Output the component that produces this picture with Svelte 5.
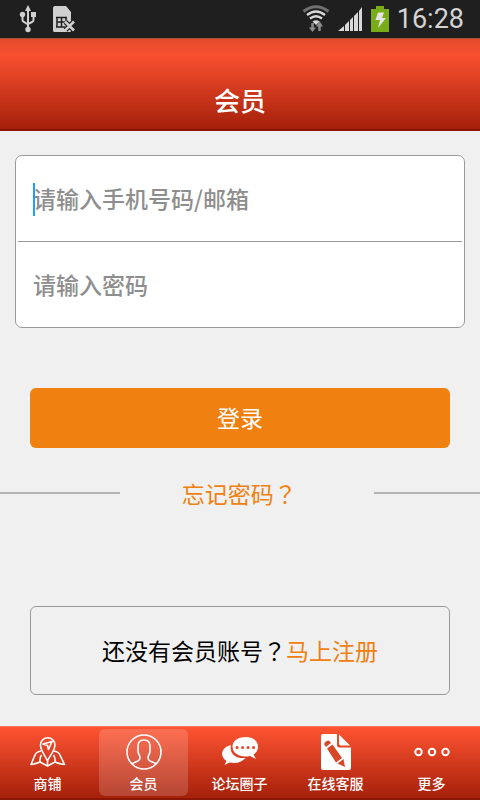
<script lang="ts">
  /** 底部导航项 */
  interface Tab {
    id: string;
    label: string;
  }

  const tabs: Tab[] = [
    { id: 'shop', label: '商铺' },
    { id: 'member', label: '会员' },
    { id: 'forum', label: '论坛圈子' },
    { id: 'service', label: '在线客服' },
    { id: 'more', label: '更多' },
  ];

  let activeTab = $state('member');
  let account = $state('');
  let password = $state('');

  /** 提交登录表单 */
  function handleSubmit(event: SubmitEvent) {
    event.preventDefault();
  }
</script>

<div class="screen">
  <div class="status-bar">
    <div class="status-group">
      <svg width="18" height="28" viewBox="0 0 18 28" fill="none" stroke="#d0d0d0" stroke-width="2">
        <path d="M9 4v20M3.500 11v4q0 1.500 1.500 2l4 2.500M14.500 10v5q0 1.500-1.500 2l-4 2" />
        <path d="M9 0l3 6H6z" fill="#d0d0d0" stroke="none" />
        <circle cx="9" cy="24.500" r="2.700" fill="#d0d0d0" stroke="none" />
        <circle cx="3.500" cy="9.500" r="2.700" fill="#d0d0d0" stroke="none" />
        <path d="M12 7h5v5h-5z" fill="#d0d0d0" stroke="none" />
      </svg>
      <svg width="23" height="27" viewBox="0 0 23 27" fill="none">
        <path d="M2 0h11l5 6v19q0 1-1 1H1.500Q0 26 0 24.500V2Q0 0 2 0z" fill="#d0d0d0" />
        <path d="M3 11.500h11M4 16h9M3 21h9M4 11v10M8.500 11v10M13 11v6" stroke="#1f1f1f" stroke-width="1.500" />
        <path d="M12.500 16l8 8M20.500 16l-8 8" stroke="#1f1f1f" stroke-width="5" />
        <path d="M12 15.500l9 9M21 15.500l-9 9" stroke="#d0d0d0" stroke-width="2.500" />
      </svg>
    </div>
    <div class="status-group right">
      <svg width="28" height="28" viewBox="0 0 28 28" fill="none">
        <path d="M1.500 6.500Q14-3 26.500 6.500" stroke="#707070" stroke-width="3" />
        <path d="M5 10Q14 3 23 10M8 13.500Q14 9 20 13.500" stroke="#d8d8d8" stroke-width="2.500" />
        <path d="M10.500 16.500q3.500-2.500 7 0L14 20z" fill="#d8d8d8" />
        <path d="M10.500 18v6M17.500 21v5" stroke="#8c8c8c" stroke-width="2.500" />
        <path d="M7 22.500h7L10.500 27zM14 21.500h7L17.500 16z" fill="#8c8c8c" />
      </svg>
      <svg width="25" height="24" viewBox="0 0 25 24" fill="#d8d8d8">
        <path d="M0 24l6-5v5zM7 18l4-4v10H7zM12 13l3-3v14h-3zM16 9l4-4v19h-4zM21 4l3-4v24h-3z" />
      </svg>
      <svg width="18" height="26" viewBox="0 0 18 26">
        <path d="M5 0h8v3h5v23H0V3h5z" fill="#78ac18" />
        <path d="M7 6.500h6l-2 5.500h4L7 22l2-8H4.500z" fill="#e4e4e4" />
      </svg>
      <time class="clock">16:28</time>
    </div>
  </div>

  <header class="title-bar">
    <h1>会员</h1>
  </header>

  <main>
    <form onsubmit={handleSubmit}>
      <div class="fields">
        <div class="field">
          <input type="text" aria-label="手机号码/邮箱" placeholder="请输入手机号码/邮箱" bind:value={account} />
          {#if !account}
            <span class="caret"></span>
          {/if}
        </div>
        <div class="field">
          <input type="password" aria-label="密码" placeholder="请输入密码" bind:value={password} />
        </div>
      </div>
      <button class="login-btn" type="submit">登录</button>
    </form>

    <div class="forgot">
      <a href="#forgot">忘记密码<span class="mark">？</span></a>
    </div>

    <div class="register">
      还没有会员账号<span class="mark">？</span><a href="#register">马上注册</a>
    </div>
  </main>

  <nav>
    {#each tabs as tab (tab.id)}
      <button class="tab" class:active={activeTab === tab.id} onclick={() => (activeTab = tab.id)}>
        <svg width="38" height="38" viewBox="0 0 38 38" fill="none" stroke="#fff" stroke-width="1.600" stroke-linejoin="round">
          {#if tab.id === 'shop'}
            <path d="M18.500 28C16 22 11.500 18 11.500 12a7.200 7.200 0 0 1 14.400 0c0 6-4.900 10-7.400 16z" />
            <path d="M14 11l9-2.500-3.500 8-1-4z" />
            <path d="M12 18q-5 1-6 4L2 31.500q6-1 9-2.500l7.500 4 7.500-4q3 1.500 9.500 2.500L31 22q-1-3-6-4" />
            <path d="M12.500 22q-2 3-1.500 7M24.500 22q2 3 1.500 7M18.500 28v5" />
          {:else if tab.id === 'member'}
            <circle cx="19" cy="19" r="17" />
            <path d="M7 31q1-1 6-3 2-1 2-3.500c0-2-2-3.500-2-6.500v-5c0-4 2-6 6-6s6 2 6 6v5c0 3-2 4.500-2 6.500q0 2.500 2 3.500 5 2 6 3" />
          {:else if tab.id === 'forum'}
            <path d="M10 12C-1 15-1 24 5.500 28L3.500 32l5-2.500q10 2 16-4.500C14 26 8 20 10 12z" fill="#fff" stroke="none" />
            <path d="M24.500 4C32 4 37 8 37 13.500c0 4-2 6.500-4.500 8L35 26l-6-3c-9 2-17.500-2-17.500-9.500C11.500 8 17 4 24.500 4z" fill="#fff" stroke="none" />
            <path d="M16 14.500h.1M21.500 14.500h.1M27 14.500h.1M32.500 14.500h.1" stroke="#e04a2a" stroke-width="3" stroke-linecap="round" />
          {:else if tab.id === 'service'}
            <path d="M6 1h14v11q0 2.500 2.500 2.500H34V35q0 2-2 2H6q-2 0-2-2V3q0-2 2-2z" fill="#fff" stroke="none" />
            <path d="M22 1.500L33 12.500h-9q-2 0-2-2z" fill="#fff" stroke="none" />
            <path d="M7 11q1-3 4-3.500 2 0 3 2.500l-5 4zM10 15.500l5.500-4L25 25l-6 4.500zM20.500 30.500l6-4.500L28 34z" fill="#d84728" stroke="none" />
          {:else}
            <g stroke-width="2">
              <circle cx="5.500" cy="19" r="3.200" />
              <circle cx="19" cy="19" r="3.200" />
              <circle cx="32.500" cy="19" r="3.200" />
            </g>
          {/if}
        </svg>
        <span>{tab.label}</span>
      </button>
    {/each}
  </nav>
</div>

<style>
  :global(body) {
    margin: 0;
    background: #f0f0f0;
  }

  .screen {
    display: flex;
    flex-direction: column;
    min-height: 100vh;
    font-family: 'Noto Sans CJK SC', sans-serif;
    font-size: 23px;
    line-height: 34px;
    color: #000;
  }

  .status-bar {
    display: flex;
    align-items: center;
    justify-content: space-between;
    height: 38px;
    padding: 0 16px 0 19px;
    background: #1f1f1f;
  }

  .status-group {
    display: flex;
    align-items: center;
    gap: 16px;
  }

  .status-group.right {
    gap: 8px;
  }

  .clock {
    font-family: Roboto, sans-serif;
    font-size: 27px;
    color: #d4d4d4;
  }

  .title-bar {
    display: flex;
    align-items: flex-end;
    justify-content: center;
    box-sizing: border-box;
    height: 93px;
    padding-bottom: 10px;
    border-top: 1px solid #a2503f;
    border-bottom: 2px solid #8a1706;
    background: linear-gradient(#e24b2d, #f9502f 18%, #a5200a);
  }

  h1 {
    margin: 0;
    font-size: 26px;
    font-weight: 500;
    line-height: 38px;
    color: #fff;
  }

  main {
    flex: 1;
    padding: 24px 0 31px;
  }

  .fields {
    margin: 0 15px;
    padding: 0 2px;
    background: #fff;
    border: 1px solid #999;
    border-radius: 7px;
  }

  .field {
    position: relative;
  }

  .field + .field {
    border-top: 1px solid #999;
  }

  input {
    display: block;
    box-sizing: border-box;
    width: 100%;
    height: 85px;
    padding: 0 15px 2px;
    background: transparent;
    border: none;
    outline: none;
    color: #000;
    caret-color: #1e9fff;
    font: inherit;
  }

  input::placeholder {
    color: #8e8e8e;
    font-weight: 500;
    opacity: 1;
  }

  .caret {
    position: absolute;
    top: 27px;
    left: 15px;
    width: 2px;
    height: 33px;
    background: #1e9fff;
    pointer-events: none;
  }

  .login-btn {
    display: block;
    width: calc(100% - 60px);
    height: 60px;
    margin: 60px 30px 0;
    padding: 0 0 2px;
    background: #f08010;
    border: none;
    border-radius: 6px;
    color: #fff;
    font: inherit;
    cursor: pointer;
  }

  .forgot {
    display: flex;
    align-items: center;
    margin-top: 28px;
  }

  .forgot::before,
  .forgot::after {
    content: '';
    flex: 0 0 25%;
    height: 2px;
    background: #b4b4b4;
  }

  .forgot::after {
    flex-basis: 22%;
  }

  .forgot a {
    flex: 1;
    padding-right: 16px;
    text-align: center;
  }

  a {
    color: #f08010;
    text-decoration: none;
  }

  .mark {
    font-family: 'Noto Sans CJK TC', sans-serif;
  }

  .register {
    margin: 96px 30px 0;
    padding: 26px 0 27px;
    border: 1px solid #999;
    border-radius: 6px;
    text-align: center;
  }

  nav {
    display: grid;
    grid-template-columns: repeat(5, 1fr);
    box-sizing: border-box;
    height: 74px;
    padding: 2px 0;
    border-top: 1px solid #f5795f;
    border-bottom: 2px solid #8a1706;
    background: linear-gradient(#ff5432, #a5200a);
  }

  .tab {
    display: flex;
    flex-direction: column;
    align-items: center;
    gap: 2px;
    margin: 0 4px 0 3px;
    padding: 4px 0 0;
    background: none;
    border: none;
    border-radius: 6px;
    color: #fff;
    font: inherit;
    font-size: 14px;
    font-weight: 500;
    line-height: 20px;
    cursor: pointer;
  }

  .tab.active {
    background: rgba(255, 255, 255, 0.17);
  }
</style>
